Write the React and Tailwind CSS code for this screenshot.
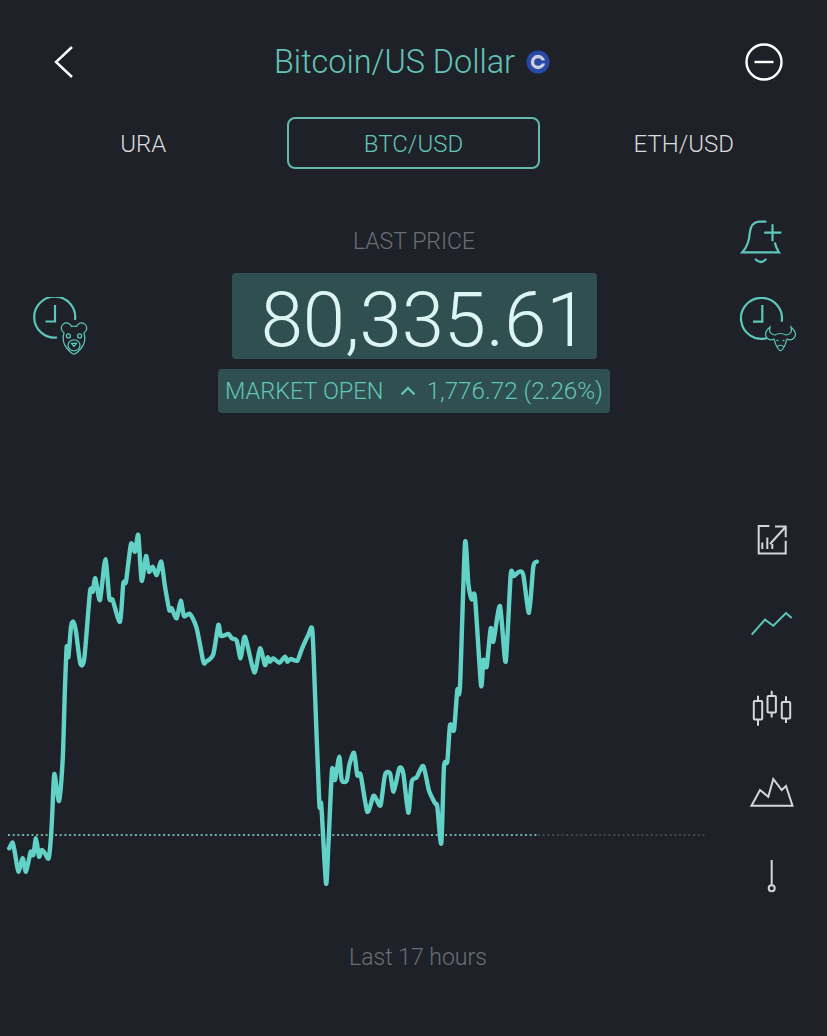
const leftTrace = [
  [28, 985], [38, 968], [45, 1000], [55, 1055], [68, 1015], [78, 1055], [92, 995], [100, 1005], [108, 955], [117, 1010],
  [125, 990], [135, 1000], [146, 1015], [153, 950], [157, 880], [163, 762], [177, 843], [188, 720], [195, 500], [200, 380],
  [205, 412], [213, 320], [220, 305], [228, 335], [241, 430], [253, 415], [270, 215], [278, 215], [286, 175], [300, 240],
  [316, 118], [328, 235], [338, 240], [360, 305], [370, 190], [378, 185], [393, 72], [405, 95], [415, 45], [425, 182],
  [438, 108], [447, 155], [458, 140], [470, 165], [484, 125], [495, 200], [508, 270], [515, 265], [530, 295], [542, 242],
  [552, 288], [570, 282], [590, 325], [610, 425], [618, 425], [640, 403], [655, 315], [663, 348], [685, 342], [695, 355],
  [710, 362], [722, 415], [735, 350], [763, 457], [780, 385], [795, 435], [803, 412], [810, 425], [820, 415], [838, 428],
];

const rightTrace = [
  [15, 410], [22, 425], [32, 417], [52, 422], [65, 388], [85, 345], [97, 330], [105, 520], [118, 850], [124, 855],
  [138, 1090], [145, 980], [156, 750], [165, 780], [178, 710], [185, 780], [200, 782], [208, 735], [222, 698], [232, 765],
  [242, 765], [262, 875], [280, 828], [290, 840], [302, 855], [315, 765], [330, 760], [341, 815], [358, 745], [370, 760],
  [385, 878], [395, 785], [410, 772], [430, 738], [447, 812], [465, 850], [472, 860], [484, 970], [492, 740], [502, 725],
  [510, 615], [522, 630], [532, 510], [540, 500], [555, 70], [565, 190], [575, 238], [585, 232], [603, 495], [610, 420],
  [620, 440], [632, 325], [640, 365], [660, 258], [677, 425], [692, 165], [702, 168], [718, 155], [730, 165], [747, 278],
  [760, 140], [770, 125],
];

const points = [
  ...leftTrace.map(([x, y]) => [x / 3, 520 + y / 3]),
  ...rightTrace.map(([x, y]) => [280 + x / 3, 520 + y / 3]),
];

// Smooth the traced points with a catmull-rom curve
const smoothPath = (pts, t = 0.12) => {
  let d = `M${pts[0][0].toFixed(1)} ${pts[0][1].toFixed(1)}`;
  for (let i = 0; i < pts.length - 1; i++) {
    const p0 = pts[i - 1] || pts[i];
    const p1 = pts[i];
    const p2 = pts[i + 1];
    const p3 = pts[i + 2] || p2;
    const c1x = p1[0] + (p2[0] - p0[0]) * t;
    const c1y = p1[1] + (p2[1] - p0[1]) * t;
    const c2x = p2[0] - (p3[0] - p1[0]) * t;
    const c2y = p2[1] - (p3[1] - p1[1]) * t;
    d += ` C${c1x.toFixed(1)} ${c1y.toFixed(1)} ${c2x.toFixed(1)} ${c2y.toFixed(1)} ${p2[0].toFixed(1)} ${p2[1].toFixed(1)}`;
  }
  return d;
};

const BearClock = () => (
  <svg width="60" height="60" viewBox="33 297 60 60" fill="none" stroke="#5cc7ba">
    <path d="M75 320 A20.5 20.5 0 1 0 57 337.5" strokeWidth="2.2" />
    <path d="M55 305 V321.5 H45.5" strokeWidth="2.2" />
    <g strokeWidth="1" transform="translate(74 339) scale(1.25) translate(-74 -339)">
      <path d="M66 334 A4.2 4.2 0 1 1 72 329 Q74 328.5 76 329 A4.2 4.2 0 1 1 82 334 Q84 341 80 346 Q76 351 74 351 Q72 351 68 346 Q64 341 66 334 Z" />
      <circle cx="69.5" cy="336.5" r="1.6" />
      <circle cx="78.5" cy="336.5" r="1.6" />
      <ellipse cx="74" cy="344" rx="4.8" ry="4.4" />
      <path d="M72 342.5 H76 L74 345 Z" />
    </g>
  </svg>
);

const BullClock = () => (
  <svg width="57" height="56" viewBox="740 297 57 56" fill="none" stroke="#5cc7ba">
    <path d="M782.7 321.7 A20.5 20.5 0 1 0 768.3 338" strokeWidth="2.2" />
    <path d="M763.3 305 V321.7 H754" strokeWidth="2.2" />
    <g strokeWidth="1.2">
      <path d="M771 327 Q764 333 768 338 Q771 341 775 339 L777 345 Q780 351 781.5 350.5 Q783 351 786 345 L788 339 Q792 341 795 338 Q799 333 792 327 Q794 334 787 335 Q781 332 776 335 Q769 334 771 327 Z" />
      <path d="M777.5 340 L779.5 341 M785.5 340 L783.5 341" />
      <path d="M778.5 346.5 Q781.5 344 784.5 346.5" />
    </g>
  </svg>
);

const BellPlus = () => (
  <svg width="42" height="46" viewBox="741 220 42 46" fill="none" stroke="#5cc7ba" strokeWidth="2.2" strokeLinecap="round">
    <path d="M766.5 221.7 H760 Q752 222 750.7 233.3 Q750 245 743.3 252.3 H780 Q777 248 776 243.3" />
    <path d="M773.5 225 V240.5 M766 232.7 H781.5" />
    <path d="M756.7 259.5 Q761.7 264.5 766.7 259.5" />
  </svg>
);

const ExportIcon = () => (
  <svg width="32" height="32" viewBox="756 525 32 32" fill="none" stroke="#d4d6da" strokeWidth="2">
    <path d="M769.3 527 H758.7 V554.5 H785.7 V541.7" />
    <path d="M770 545 L785.5 528 M775 527.5 H785.7 V538.3" />
    <path d="M762.3 543.5 V550 M767.3 538.5 V550 M772.3 545 V550" />
  </svg>
);

const LineIcon = () => (
  <svg width="44" height="26" viewBox="750 613 44 26" fill="none" stroke="#5cc7ba" strokeWidth="2">
    <path d="M751.7 636.7 L765 621.7 L773.3 627.7 L786 615 L791.7 620" />
  </svg>
);

const CandleIcon = () => (
  <svg width="42" height="38" viewBox="751 690 42 38" fill="none" stroke="#d4d6da" strokeWidth="2">
    <rect x="753.8" y="702" width="8.4" height="18.5" rx="1" />
    <path d="M758 696.7 V702 M758 720.5 V726.7" />
    <rect x="767.5" y="697" width="8.4" height="16.5" rx="1" />
    <path d="M771.7 691.7 V697 M771.7 713.5 V718.5" />
    <rect x="781.8" y="703" width="8.4" height="16.5" rx="1" />
    <path d="M786 697.3 V703 M786 719.5 V724" />
  </svg>
);

const MountainIcon = () => (
  <svg width="46" height="30" viewBox="749 777 46 30" fill="none" stroke="#d4d6da" strokeWidth="2">
    <path d="M751.5 805.7 L760 790 L768.3 796.7 L773.3 779 L781.7 790 L786 786 L792.5 805.7 Z" />
  </svg>
);

const PinIcon = () => (
  <svg width="10" height="34" viewBox="767 860 10 34" fill="none" stroke="#d4d6da" strokeWidth="2">
    <path d="M771.7 861 V886" />
    <circle cx="771.7" cy="889.3" r="3" />
  </svg>
);

const App = () => {
  return (
    <div className="w-[827px] h-[1036px] bg-[#1e2128] overflow-hidden font-['Roboto',sans-serif] font-light">
      {/* Header */}
      <div className="h-[110px] pt-[14px] pl-[52px] pr-[44px] flex items-center justify-between">
        <svg width="22" height="34" viewBox="0 0 22 34" fill="none" stroke="#ffffff" strokeWidth="2.4">
          <path d="M20 2 L4 17 L20 32" />
        </svg>
        <div className="flex items-center gap-[11px] ml-[5px]">
          <span className="text-[32.4px] leading-none text-[#63c4b6]">Bitcoin/US Dollar</span>
          <svg width="24" height="24" viewBox="0 0 24 24">
            <circle cx="12" cy="12" r="11.5" fill="#2a49a5" />
            <circle cx="12" cy="12" r="5.5" fill="none" stroke="#c9cfe0" strokeWidth="3.4" />
            <rect x="15" y="10.5" width="5" height="3" fill="#2a49a5" />
          </svg>
        </div>
        <svg width="38" height="38" viewBox="0 0 38 38" fill="none" stroke="#ffffff" strokeWidth="2.4">
          <circle cx="19" cy="19" r="17.5" />
          <path d="M9.5 19 H28.5" />
        </svg>
      </div>

      {/* Tabs */}
      <div className="mt-[7px] px-2 grid grid-cols-3 items-center text-[24px] text-[#d8dadd]">
        <div className="text-center pt-px">URA</div>
        <div className="h-[52px] mx-[9px] border-2 border-[#63b9ae] rounded-lg flex items-center justify-center pt-px text-[#63c4b6]">
          BTC/USD
        </div>
        <div className="text-center pt-px">ETH/USD</div>
      </div>

      {/* Price */}
      <div className="mt-[51px] grid grid-cols-[218px_392px_1fr]">
        <div className="pl-[33px] pt-[77px]">
          <BearClock />
        </div>
        <div className="flex flex-col items-center">
          <div className="h-[44px] flex items-center text-[23px] text-[#6a6e76]">LAST PRICE</div>
          <div className="mt-[9px] w-[365px] h-[86px] bg-[#2f4f50] rounded-sm flex items-center justify-end pt-[8px] pr-[8px] text-[76px] leading-none text-[#dcf5f3]">
            80,335.61
          </div>
          <div className="mt-[10px] w-full h-[44px] bg-[#2f4f50] rounded-sm flex items-center justify-between px-[7px] pt-px text-[23.5px] text-[#63c4b6]">
            <span>MARKET OPEN</span>
            <span className="flex items-center gap-[11px] text-[24.2px]">
              <svg width="16" height="10" viewBox="0 0 16 10" fill="none" stroke="#63c4b6" strokeWidth="2.4">
                <path d="M1.5 8.5 L8 2 L14.5 8.5" />
              </svg>
              1,776.72 (2.26%)
            </span>
          </div>
        </div>
        <div className="pl-[130px] flex flex-col">
          <BellPlus />
          <div className="mt-[31px] -ml-px">
            <BullClock />
          </div>
        </div>
      </div>

      {/* Chart */}
      <div className="mt-[85px] flex">
        <svg width="707" height="370" viewBox="0 520 707 370" fill="none" className="mt-[22px] shrink-0">
          <line x1="8" y1="835" x2="538" y2="835" stroke="#8fdcd3" strokeWidth="1.6" strokeDasharray="2 2.7" />
          <line x1="538" y1="835" x2="707" y2="835" stroke="#54535a" strokeWidth="1.6" strokeDasharray="2 2.7" />
          <path d={smoothPath(points)} stroke="#62d2c7" strokeWidth="4.4" strokeLinejoin="round" strokeLinecap="round" />
        </svg>
        <div className="w-[130px] shrink-0 flex flex-col items-center">
          <div className="h-[84px] flex items-center justify-center"><ExportIcon /></div>
          <div className="h-[84px] flex items-center justify-center"><LineIcon /></div>
          <div className="h-[84px] flex items-center justify-center"><CandleIcon /></div>
          <div className="h-[84px] flex items-center justify-center"><MountainIcon /></div>
          <div className="h-[84px] flex items-center justify-center"><PinIcon /></div>
        </div>
      </div>

      {/* Footer */}
      <div className="mt-[25px] pl-[9px] h-[30px] flex items-center justify-center text-[23px] text-[#6a6e76]">
        Last 17 hours
      </div>
    </div>
  );
};

export default App;
